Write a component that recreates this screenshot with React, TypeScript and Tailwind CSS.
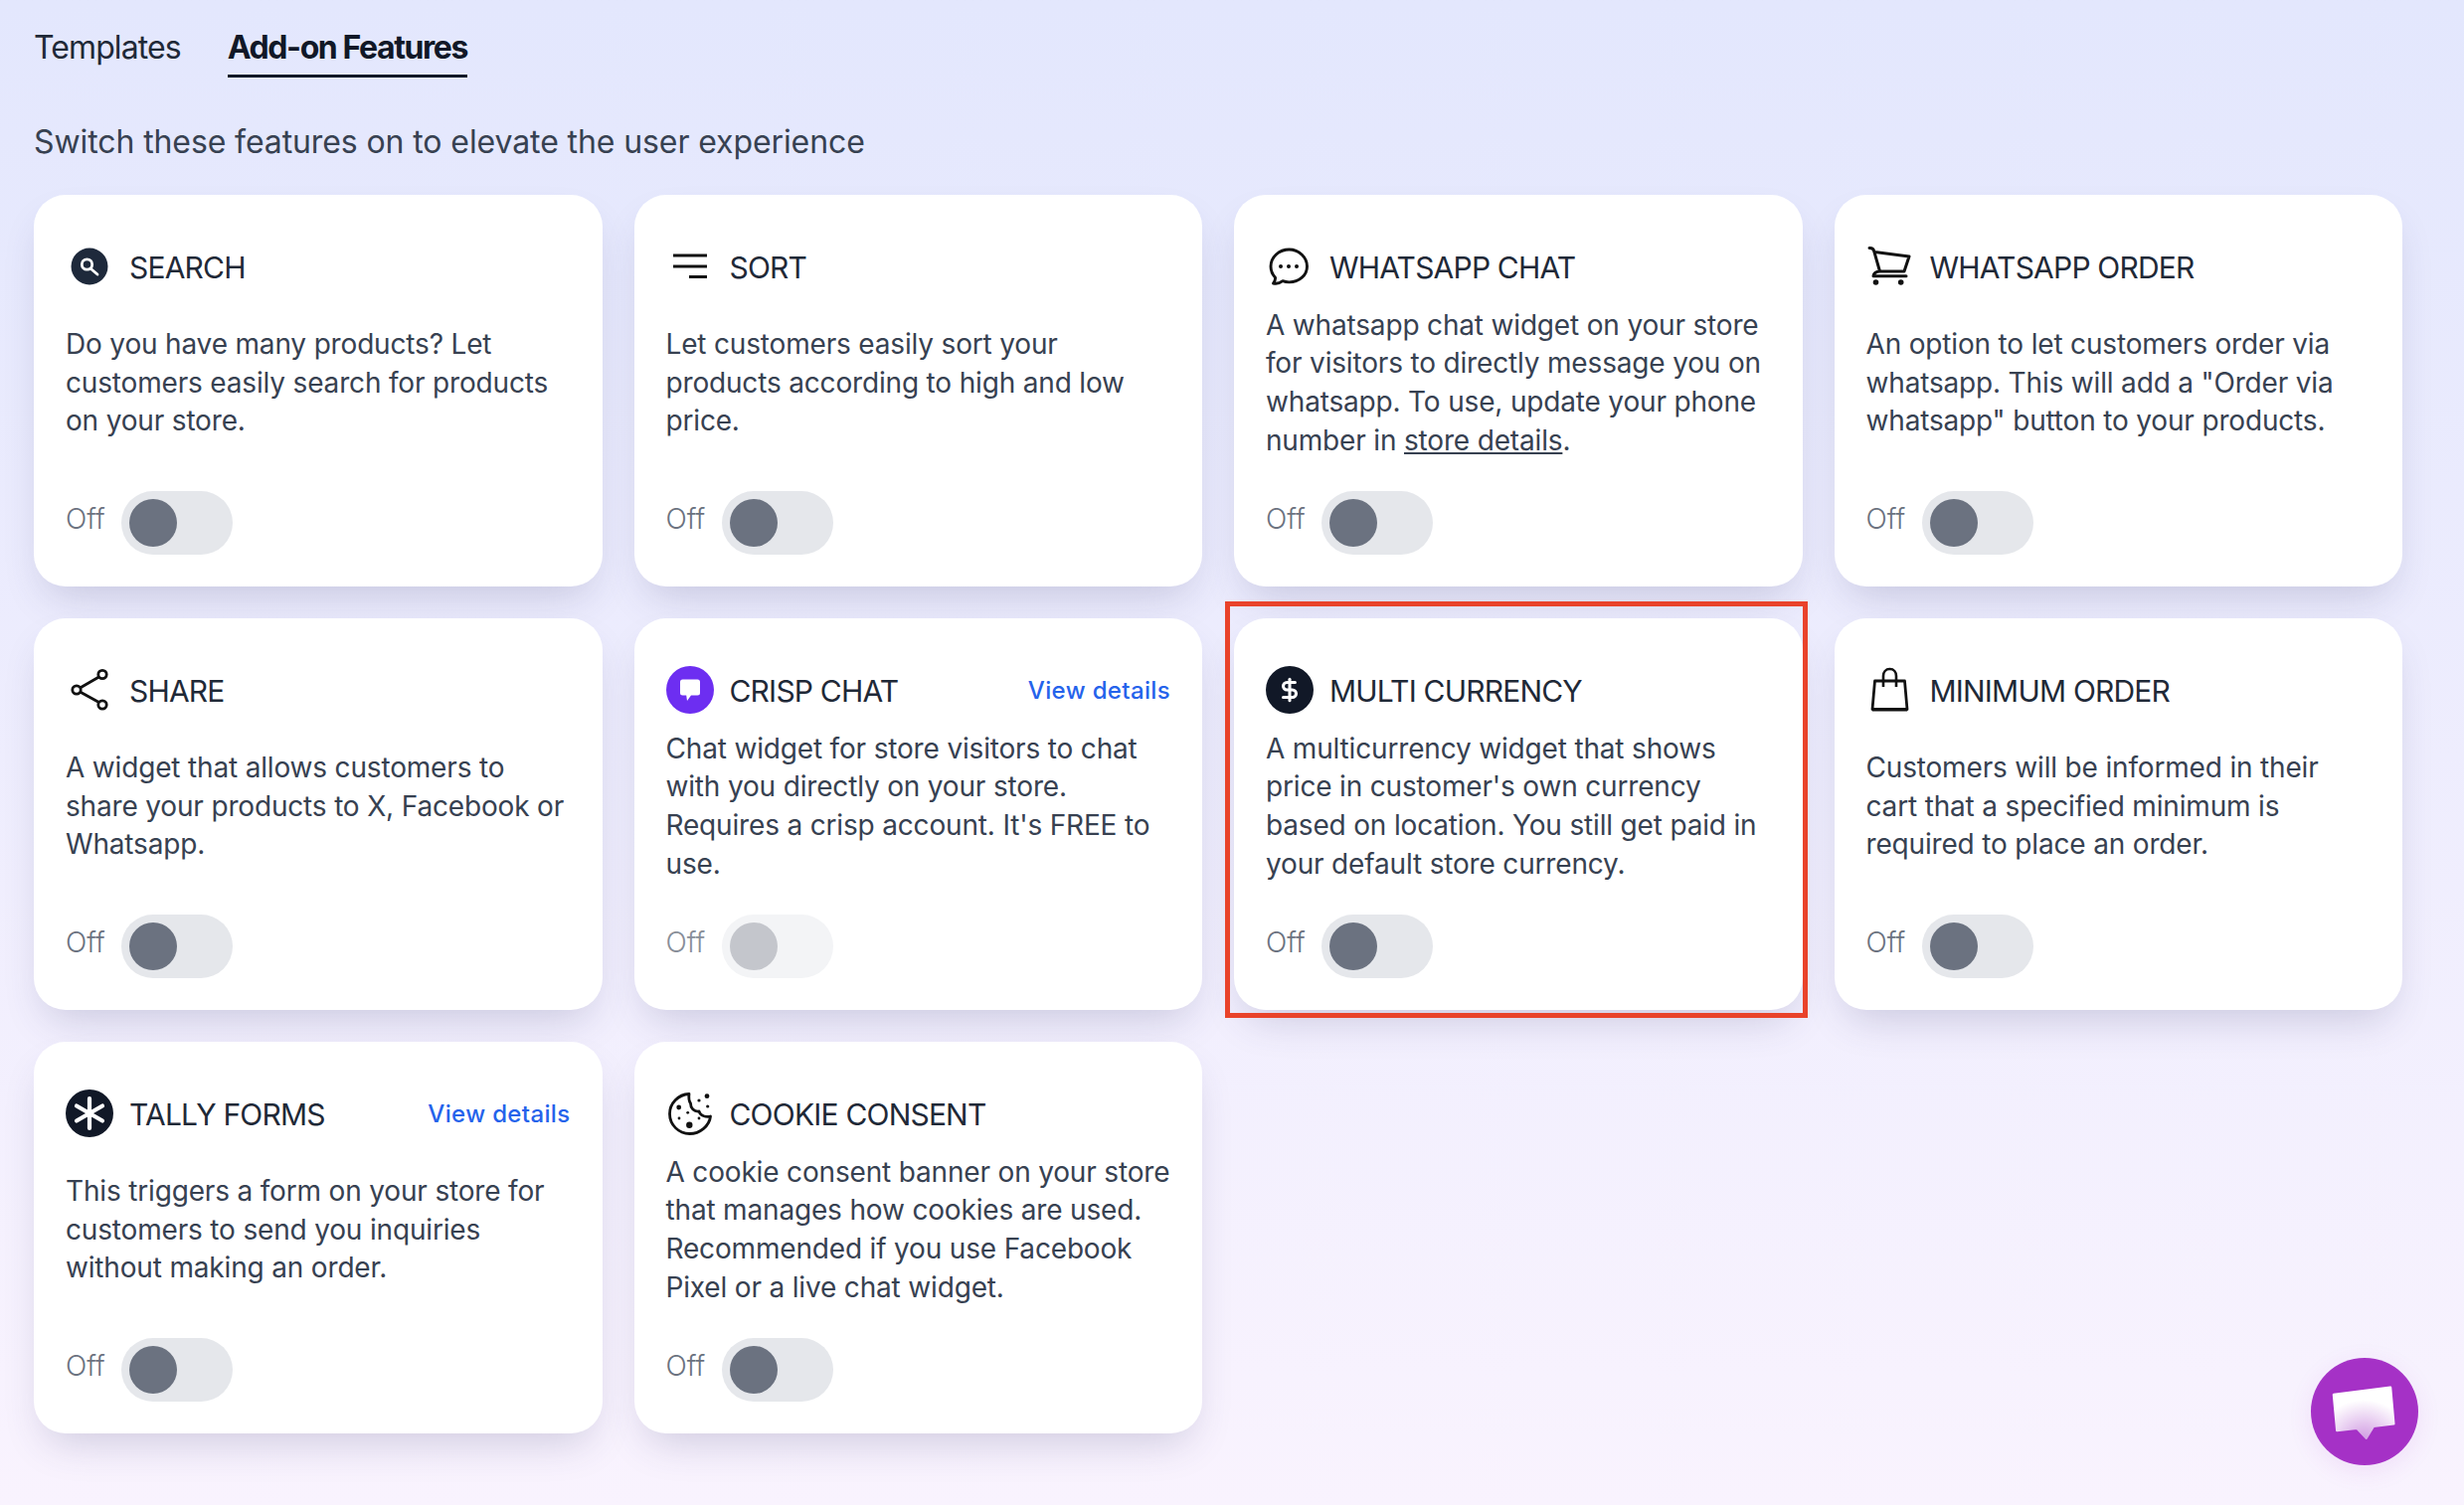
import type { ReactNode } from 'react'
import { DollarSign } from 'lucide-react'

const SearchIcon = () => (
  <svg viewBox="0 0 48 48" className="w-12 h-12">
    <circle cx="24" cy="24" r="18.5" fill="#1e293b" />
    <circle cx="21.5" cy="22" r="5.2" fill="none" stroke="#fff" strokeWidth="2.8" />
    <path d="M25.500 26.500l6.500 5.500" stroke="#fff" strokeWidth="2.800" strokeLinecap="round" />
  </svg>
)

const SortIcon = () => (
  <svg viewBox="0 0 48 48" className="w-12 h-12">
    <path d="M7 13h34M7 24h34M23 34.5h18" stroke="#111" strokeWidth="3" fill="none" />
  </svg>
)

const ChatIcon = () => (
  <svg viewBox="0 0 48 48" className="w-12 h-12">
    <path
      d="M23.5 7C13.3 7 5 14.6 5 24c0 4.3 1.7 8.2 4.5 11.2.3 1.900-.6 3.900-2 5.800 3.200.8 6.900-.3 9.500-2.300 2 .8 4.200 1.200 6.500 1.200 10.200 0 18-7.300 18-16S33.700 7 23.500 7z"
      fill="none"
      stroke="#111"
      strokeWidth="2.900"
      strokeLinejoin="round"
    />
    <circle cx="15" cy="24" r="2" fill="#111" />
    <circle cx="23" cy="24" r="2" fill="#111" />
    <circle cx="31" cy="24" r="2" fill="#111" />
  </svg>
)

const CartIcon = () => (
  <svg viewBox="0 0 48 48" className="w-12 h-12">
    <path
      d="M3 5.500c2.500-.2 4 .6 4.600 2.800L13.500 29h24.500L43 14 8.500 9.500M13.500 29c-3.500.3-6 1.500-6.500 4.700h33"
      fill="none"
      stroke="#111"
      strokeWidth="3"
      strokeLinecap="round"
      strokeLinejoin="round"
    />
    <circle cx="9.500" cy="40" r="2.800" fill="#111" />
    <circle cx="34.700" cy="40" r="2.800" fill="#111" />
  </svg>
)

const ShareIcon = () => (
  <svg viewBox="0 0 48 48" className="w-12 h-12">
    <path d="M33.500 11L14.500 22M14.500 26l19 10.500" stroke="#111" strokeWidth="2.800" fill="none" />
    <circle cx="37" cy="8.500" r="4.200" fill="none" stroke="#111" strokeWidth="2.800" />
    <circle cx="11" cy="24" r="4.200" fill="none" stroke="#111" strokeWidth="2.800" />
    <circle cx="37" cy="39" r="4.200" fill="none" stroke="#111" strokeWidth="2.800" />
  </svg>
)

const CrispIcon = () => (
  <svg viewBox="0 0 48 48" className="w-12 h-12">
    <circle cx="24" cy="24" r="24" fill="#6d2ef1" />
    <path
      d="M16.500 13.500h15a2.500 2.500 0 0 1 2.500 2.500v11a2.500 2.500 0 0 1-2.500 2.500h-6.500l-4 5.500-.8-5.500h-3.700a2.500 2.500 0 0 1-2.500-2.500V16a2.500 2.500 0 0 1 2.500-2.500z"
      fill="#fff"
    />
  </svg>
)

const CurrencyIcon = () => (
  <span className="w-12 h-12 rounded-full bg-[#111827] flex items-center justify-center">
    <DollarSign className="w-[26px] h-[26px] text-white" strokeWidth={2.8} />
  </span>
)

const BagIcon = () => (
  <svg viewBox="0 0 48 48" className="w-12 h-12">
    <path
      d="M8.500 15h30l2.500 28.500H6z"
      fill="none"
      stroke="#111"
      strokeWidth="2.800"
      strokeLinejoin="round"
    />
    <path d="M6 44h35" stroke="#111" strokeWidth="3.200" />
    <path d="M17 21V10c0-4 2.500-7 6.500-7s6.500 3 6.500 7v11" fill="none" stroke="#111" strokeWidth="2.600" />
  </svg>
)

const TallyIcon = () => (
  <svg viewBox="0 0 48 48" className="w-12 h-12">
    <circle cx="24" cy="24" r="24" fill="#111827" />
    <path
      d="M24 9v30M11 16.500l26 15M11 31.500l26-15"
      stroke="#fff"
      strokeWidth="4.200"
      strokeLinecap="round"
    />
  </svg>
)

const CookieIcon = () => (
  <svg viewBox="0 0 48 48" className="w-12 h-12">
    <path
      d="M23 4.500C12 5 3.500 14 3.500 24.500c0 11 9 20 20 20 10.500 0 20-8 21-17.500-5 1-10-.5-11.500-5-5 .5-8.500-3-8.500-8 -2-3-2-6-1.500-9.500z"
      fill="none"
      stroke="#111"
      strokeWidth="2.800"
      strokeLinejoin="round"
    />
    <circle cx="41" cy="6.700" r="2.400" fill="#111" />
    <circle cx="33" cy="11" r="1.600" fill="#111" />
    <circle cx="41.700" cy="17" r="1.600" fill="#111" />
    <circle cx="12.700" cy="18" r="2.400" fill="#111" />
    <circle cx="21.700" cy="23.300" r="1.400" fill="#111" />
    <circle cx="13" cy="29" r="1.400" fill="#111" />
    <circle cx="33" cy="29" r="1.400" fill="#111" />
    <circle cx="23.300" cy="35.700" r="3.200" fill="#111" />
  </svg>
)

interface Feature {
  title: string
  icon: ReactNode
  body: ReactNode
  details?: boolean
  disabled?: boolean
  marked?: boolean
}

const features: Feature[] = [
  {
    title: 'Search',
    icon: <SearchIcon />,
    body: 'Do you have many products? Let customers easily search for products on your store.',
  },
  {
    title: 'Sort',
    icon: <SortIcon />,
    body: 'Let customers easily sort your products according to high and low price.',
  },
  {
    title: 'Whatsapp chat',
    icon: <ChatIcon />,
    body: (
      <>
        A whatsapp chat widget on your store for visitors to directly message you on whatsapp. To use, update your
        phone number in <span className="underline">store details</span>.
      </>
    ),
  },
  {
    title: 'Whatsapp order',
    icon: <CartIcon />,
    body: 'An option to let customers order via whatsapp. This will add a "Order via whatsapp" button to your products.',
  },
  {
    title: 'Share',
    icon: <ShareIcon />,
    body: 'A widget that allows customers to share your products to X, Facebook or Whatsapp.',
  },
  {
    title: 'Crisp chat',
    icon: <CrispIcon />,
    body: "Chat widget for store visitors to chat with you directly on your store. Requires a crisp account. It's FREE to use.",
    details: true,
    disabled: true,
  },
  {
    title: 'Multi currency',
    icon: <CurrencyIcon />,
    body: "A multicurrency widget that shows price in customer's own currency based on location. You still get paid in your default store currency.",
    marked: true,
  },
  {
    title: 'Minimum order',
    icon: <BagIcon />,
    body: 'Customers will be informed in their cart that a specified minimum is required to place an order.',
  },
  {
    title: 'Tally forms',
    icon: <TallyIcon />,
    body: 'This triggers a form on your store for customers to send you inquiries without making an order.',
    details: true,
  },
  {
    title: 'Cookie consent',
    icon: <CookieIcon />,
    body: 'A cookie consent banner on your store that manages how cookies are used. Recommended if you use Facebook Pixel or a live chat widget.',
  },
]

function FeatureCard({ feature }: { feature: Feature }) {
  return (
    <div className="relative flex flex-col bg-white rounded-[32px] px-8 pt-12 pb-8 shadow-[0_20px_40px_-12px_rgba(60,60,110,0.22)]">
      <div className="flex items-center h-12">
        <span className="shrink-0 w-12 h-12">{feature.icon}</span>
        <h3 className="ml-4 pt-[2px] text-[30px] leading-[48px] uppercase text-[#1f2937] tracking-[-0.8px]">
          {feature.title}
        </h3>
        {feature.details && (
          <a className="ml-auto pt-[1px] text-[24px] font-medium text-[#2563eb] tracking-[0.35px]">View details</a>
        )}
      </div>
      <div className="flex items-center h-[184px] pt-[2px]">
        <p className="text-[28px] leading-[38.6px] text-[#374151] tracking-[-0.17px]">{feature.body}</p>
      </div>
      <div className="flex items-start gap-4 mt-[18px]">
        <span
          className={`min-w-[40px] text-[28px] leading-[56px] font-light text-[#6b7280] ${feature.disabled ? 'opacity-80' : ''}`}
        >
          Off
        </span>
        <span
          className={`flex items-center w-[112px] h-16 rounded-full pl-2 ${feature.disabled ? 'bg-[#f3f4f6]' : 'bg-[#e5e7eb]'}`}
        >
          <span className={`w-12 h-12 rounded-full ${feature.disabled ? 'bg-[#c4c6cc]' : 'bg-[#6b7280]'}`} />
        </span>
      </div>
      {/* annotation box around the card */}
      {feature.marked && (
        <div className="absolute -left-[9px] -right-[5px] -top-[17px] -bottom-[8px] border-[5px] border-[#e9432a]" />
      )}
    </div>
  )
}

export default function App() {
  return (
    <div className="min-h-screen bg-gradient-to-b from-[#e3e7fd] to-[#f9f3fe] pl-[34px] pr-[62px] pt-6 font-['Inter',sans-serif]">
      <div className="flex gap-[47px]">
        <button className="h-[54px] text-[32px] leading-[48px] text-[#1f2937] text-left pb-[6px] tracking-[-0.9px]">
          Templates
        </button>
        <button className="h-[54px] text-[32px] leading-[48px] font-bold text-[#111827] border-b-[3px] border-[#111827] pb-[3px] tracking-[-1.4px]">
          Add-on Features
        </button>
      </div>
      <p className="mt-[41px] mb-[29px] text-[32px] leading-[48px] text-[#374151] tracking-[-0.1px]">
        Switch these features on to elevate the user experience
      </p>
      <div className="grid grid-cols-4 gap-8">
        {features.map(f => (
          <FeatureCard key={f.title} feature={f} />
        ))}
      </div>
      <button className="fixed right-[46px] bottom-[40px] w-[108px] h-[108px] rounded-full bg-[#a531c6] shadow-[0_6px_24px_rgba(165,49,198,0.1)]">
        <svg viewBox="0 0 108 108" className="w-full h-full">
          <defs>
            <radialGradient id="bubble" cx="0.5" cy="1" r="0.75">
              <stop offset="0" stopColor="#d29fe3" />
              <stop offset="1" stopColor="#ffffff" />
            </radialGradient>
          </defs>
          <path
            d="M23 37L80 29.700L83.300 66.300L63 68.700L55.700 80.700L46.300 70.700L26.300 73z"
            fill="url(#bubble)"
            stroke="url(#bubble)"
            strokeWidth="2.500"
            strokeLinejoin="round"
          />
        </svg>
      </button>
    </div>
  )
}
